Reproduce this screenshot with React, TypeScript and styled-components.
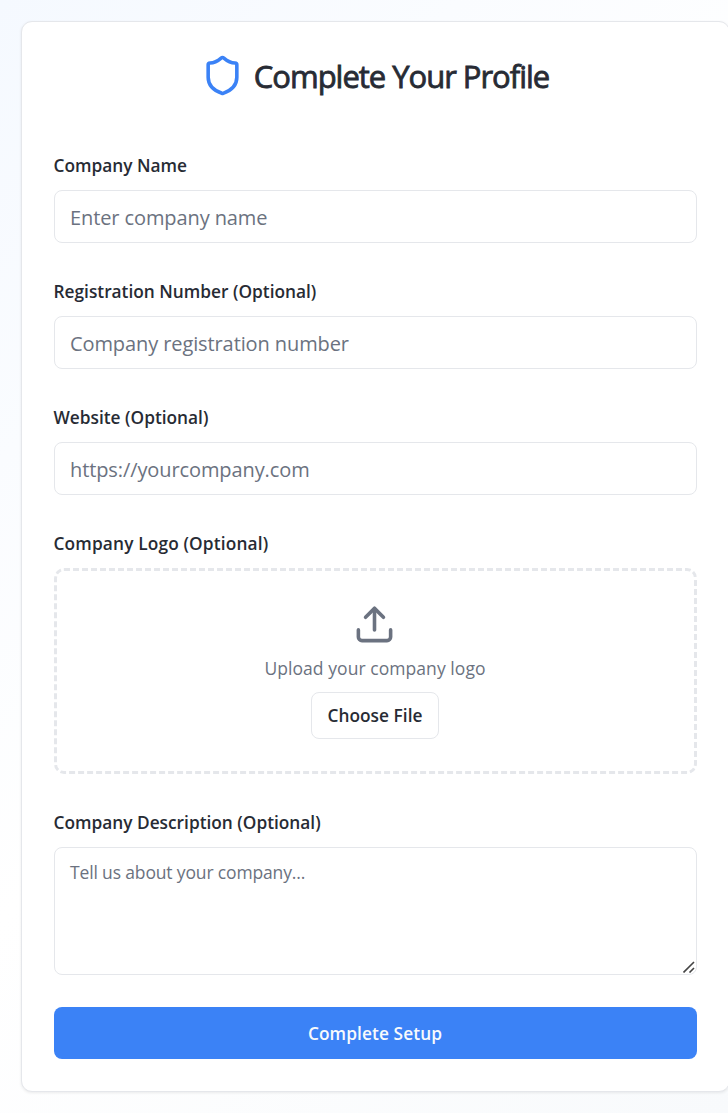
import React from 'react';
import styled, { createGlobalStyle } from 'styled-components';

const GlobalStyle = createGlobalStyle`
  *, *::before, *::after { box-sizing: border-box; }
  html, body { margin: 0; padding: 0; }
  body {
    overflow: hidden;
    font-family: "Segoe UI", "Open Sans", "Noto Sans", sans-serif;
    color: #272b34;
  }
`;

const Page = styled.main`
  width: 728px;
  height: 1113px;
  padding: 21px 0 0 21px;
  overflow: hidden;
  background: linear-gradient(135deg, #f5f9ff 0%, #ffffff 50%, #f8fafc 100%);
`;

const Card = styled.form`
  width: 709px;
  height: 1071px;
  padding: 32px;
  border: 1px solid #e5e7eb;
  border-radius: 11px;
  background: #fff;
  box-shadow: 0 1px 3px rgba(0, 0, 0, 0.08);
  display: flex;
  flex-direction: column;
`;

const Header = styled.header`
  display: flex;
  align-items: center;
  justify-content: center;
  gap: 10px;
  height: 43px;
  margin-bottom: 56px;
  padding-right: 1px;
`;

const ShieldIcon = styled.svg`
  width: 43px;
  height: 43px;
  flex: none;
  margin-bottom: 1px;
`;

const Title = styled.h1`
  margin: 2px 0 0;
  font-size: 31px;
  line-height: 43px;
  font-weight: 400;
  -webkit-text-stroke: 0.8px currentColor;
  letter-spacing: -1.02px;
  white-space: nowrap;
`;

const Field = styled.div<{ $gap?: number }>`
  display: flex;
  flex-direction: column;
  margin-bottom: ${(p) => p.$gap ?? 36}px;
`;

const Label = styled.label<{ $track?: number }>`
  height: 24px;
  line-height: 24px;
  margin: 1px 0 12px -0.5px;
  font-size: 17.3px;
  font-weight: 600;
  letter-spacing: ${(p) => p.$track ?? 0}px;
  white-space: nowrap;
`;

const Input = styled.input`
  height: 53px;
  width: 100%;
  padding: 2px 15px 0;
  border: 1px solid #e5e7eb;
  border-radius: 8px;
  background: #fff;
  font-family: inherit;
  font-size: 20px;
  letter-spacing: -0.1px;
  outline: none;
  &::placeholder { color: #6b7280; opacity: 1; }
`;

const DropZone = styled.div`
  height: 206px;
  border: 3px dashed #e5e7eb;
  border-radius: 10px;
  padding: 32px 1px 0 0;
  display: flex;
  flex-direction: column;
  align-items: center;
`;

const UploadIcon = styled.svg`
  width: 43px;
  height: 43px;
  flex: none;
  margin-right: 1px;
`;

const Hint = styled.p`
  margin: 10px 0 11px;
  height: 25px;
  line-height: 25px;
  font-size: 17.5px;
  color: #6b7280;
  letter-spacing: 0.06px;
`;

const FileButton = styled.button`
  width: 128px;
  height: 47px;
  padding: 0;
  border: 1px solid #e5e7eb;
  border-radius: 8px;
  background: #fff;
  color: #272b34;
  font-family: inherit;
  font-size: 17.3px;
  font-weight: 600;
  letter-spacing: 0.05px;
`;

const TextAreaFrame = styled.div`
  position: relative;
  display: flex;
`;

const TextArea = styled.textarea`
  height: 128px;
  width: 100%;
  padding: 11px 15px;
  border: 1px solid #e5e7eb;
  border-radius: 8px;
  background: #fff;
  font-family: inherit;
  font-size: 17.5px;
  line-height: 26px;
  letter-spacing: -0.15px;
  resize: none;
  outline: none;
  &::placeholder { color: #6b7280; opacity: 1; }
`;

const Grip = styled.svg`
  position: absolute;
  right: 2px;
  bottom: 2px;
  width: 12px;
  height: 12px;
  pointer-events: none;
`;

const SubmitButton = styled.button`
  height: 52px;
  flex: none;
  padding: 1px 1px 0 0;
  border: 0;
  border-radius: 8px;
  background: #3b82f6;
  color: #f8fafc;
  font-family: inherit;
  font-size: 17.3px;
  font-weight: 600;
  letter-spacing: 0.1px;
`;

export default function App() {
  return (
    <>
      <GlobalStyle />
      <Page>
        <Card>
          <Header>
            <ShieldIcon viewBox="0 0 24 24" fill="none" stroke="#3b82f6" strokeWidth="2" strokeLinecap="round" strokeLinejoin="round">
              <path d="M20 13c0 5-3.5 7.5-7.66 8.95a1 1 0 0 1-.67-.01C7.5 20.5 4 18 4 13V6a1 1 0 0 1 1-1c2 0 4.5-1.2 6.24-2.72a1.17 1.17 0 0 1 1.52 0C14.51 3.81 17 5 19 5a1 1 0 0 1 1 1z" />
            </ShieldIcon>
            <Title>Complete Your Profile</Title>
          </Header>
          <Field>
            <Label htmlFor="name">Company Name</Label>
            <Input id="name" placeholder="Enter company name" />
          </Field>
          <Field>
            <Label htmlFor="reg">Registration Number (Optional)</Label>
            <Input id="reg" placeholder="Company registration number" />
          </Field>
          <Field>
            <Label htmlFor="site">Website (Optional)</Label>
            <Input id="site" placeholder="https://yourcompany.com" />
          </Field>
          <Field>
            <Label $track={0.15}>Company Logo (Optional)</Label>
            <DropZone>
              <UploadIcon viewBox="0 0 24 24" fill="none" stroke="#6b7280" strokeWidth="2" strokeLinecap="round" strokeLinejoin="round">
                <path d="M21 15v4a2 2 0 0 1-2 2H5a2 2 0 0 1-2-2v-4" />
                <path d="m17 8-5-5-5 5" />
                <path d="M12 3v12" />
              </UploadIcon>
              <Hint>Upload your company logo</Hint>
              <FileButton type="button">Choose File</FileButton>
            </DropZone>
          </Field>
          <Field $gap={32}>
            <Label htmlFor="about">Company Description (Optional)</Label>
            <TextAreaFrame>
              <TextArea id="about" placeholder="Tell us about your company..." />
              <Grip viewBox="0 0 12 12" stroke="#444" strokeWidth="1.6" fill="none">
                <path d="M0.5 11.5 11 1M6.5 11.5 11 7" />
              </Grip>
            </TextAreaFrame>
          </Field>
          <SubmitButton type="button">Complete Setup</SubmitButton>
        </Card>
      </Page>
    </>
  );
}
